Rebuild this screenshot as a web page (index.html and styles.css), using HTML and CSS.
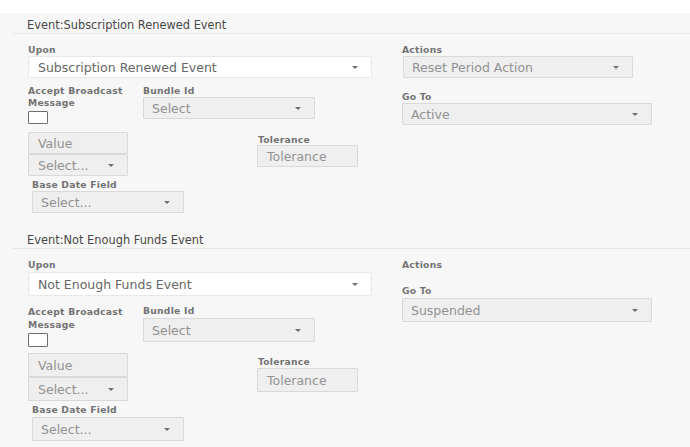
FILE: index.html
```html
<!DOCTYPE html>
<html>
<head>
<meta charset="utf-8">
<link rel="stylesheet" href="styles.css">
</head>
<body>
<div class="page">
  <section class="event">
    <div class="event-head">Event:Subscription Renewed Event</div>
    <div class="event-body">
      <div class="col-left">
        <div class="field">
          <div class="label">Upon</div>
          <div class="select select-white w-upon"><span>Subscription Renewed Event</span><i class="caret"></i></div>
        </div>
        <div class="row row-mid">
          <div class="field f-accept">
            <div class="label label-2">Accept Broadcast<br>Message</div>
            <div class="checkbox"></div>
          </div>
          <div class="field">
            <div class="label">Bundle Id</div>
            <div class="select w-bundle"><span>Select</span><i class="caret"></i></div>
          </div>
        </div>
        <div class="row row-val">
          <div class="stack">
            <div class="select w-val"><span>Value</span></div>
            <div class="select w-val"><span>Select...</span><i class="caret"></i></div>
          </div>
          <div class="field f-tol">
            <div class="label">Tolerance</div>
            <div class="select w-tol"><span>Tolerance</span></div>
          </div>
        </div>
        <div class="field f-base">
          <div class="label">Base Date Field</div>
          <div class="select w-base"><span>Select...</span><i class="caret"></i></div>
        </div>
      </div>
      <div class="col-right">
        <div class="field">
          <div class="label">Actions</div>
          <div class="select w-actions"><span>Reset Period Action</span><i class="caret"></i></div>
        </div>
        <div class="field f-goto">
          <div class="label">Go To</div>
          <div class="select w-goto"><span>Active</span><i class="caret"></i></div>
        </div>
      </div>
    </div>
  </section>

  <section class="event event-tall">
    <div class="event-head">Event:Not Enough Funds Event</div>
    <div class="event-body">
      <div class="col-left">
        <div class="field">
          <div class="label">Upon</div>
          <div class="select select-white w-upon"><span>Not Enough Funds Event</span><i class="caret"></i></div>
        </div>
        <div class="row row-mid">
          <div class="field f-accept">
            <div class="label label-2">Accept Broadcast<br>Message</div>
            <div class="checkbox"></div>
          </div>
          <div class="field">
            <div class="label">Bundle Id</div>
            <div class="select w-bundle"><span>Select</span><i class="caret"></i></div>
          </div>
        </div>
        <div class="row row-val">
          <div class="stack">
            <div class="select w-val"><span>Value</span></div>
            <div class="select w-val"><span>Select...</span><i class="caret"></i></div>
          </div>
          <div class="field f-tol">
            <div class="label">Tolerance</div>
            <div class="select w-tol"><span>Tolerance</span></div>
          </div>
        </div>
        <div class="field f-base">
          <div class="label">Base Date Field</div>
          <div class="select w-base"><span>Select...</span><i class="caret"></i></div>
        </div>
      </div>
      <div class="col-right">
        <div class="field">
          <div class="label">Actions</div>
        </div>
        <div class="field f-goto">
          <div class="label">Go To</div>
          <div class="select w-goto"><span>Suspended</span><i class="caret"></i></div>
        </div>
      </div>
    </div>
  </section>
</div>
</body>
</html>
```

FILE: styles.css
```css
* { box-sizing: border-box; }

html, body {
  margin: 0;
  padding: 0;
  background: #ffffff;
  font-family: "DejaVu Sans", "Liberation Sans", sans-serif;
}

.page {
  margin-top: 13px;
  background: #f7f7f7;
  min-height: 434px;
}

.event {
  --h: 22px;
  --lh: 11px;
  --lh2: 12px;
  padding-bottom: 15px;
}

.event-tall {
  --h: 24px;
  --lh: 12px;
  --lh2: 13px;
}

.event-head {
  margin-left: 12px;
  padding-left: 15px;
  padding-top: 4px;
  height: 21px;
  line-height: 17px;
  font-size: 11.4px;
  color: #474747;
  border-bottom: 1px solid #e9e9e9;
}

.event-body {
  display: flex;
  padding-top: 10px;
}

.event-tall .event-body { padding-top: 10px; }

.col-left {
  padding-left: 28px;
  width: 402px;
}

.col-right {
  display: flex;
  flex-direction: column;
}

.field {
  display: flex;
  flex-direction: column;
}

.label {
  font-size: 9.2px;
  font-weight: bold;
  color: #737373;
  line-height: var(--lh);
  height: var(--lh);
  letter-spacing: 0.25px;
}

.label-2 {
  line-height: var(--lh2);
  height: auto;
}

.select {
  position: relative;
  display: flex;
  align-items: center;
  height: var(--h);
  padding-left: 8px;
  background: #efefef;
  border: 1px solid #d9d9d9;
  border-radius: 1px;
  font-size: 12.5px;
  color: #929292;
  white-space: nowrap;
}

.select-white {
  background: #ffffff;
  border-color: #e8e8e8;
  color: #666666;
  padding-left: 9px;
}

.caret {
  position: absolute;
  right: 13px;
  top: 50%;
  margin-top: -1px;
  width: 0;
  height: 0;
  border-left: 3px solid transparent;
  border-right: 3px solid transparent;
  border-top: 3px solid #6e6e6e;
}

.w-upon { width: 344px; margin-top: 1px; }
.w-bundle { width: 172px; margin-top: 1px; }
.w-val { width: 100px; padding-left: 9px; }
.w-tol { width: 101px; padding-left: 9px; }
.w-base { width: 152px; margin-top: 1px; }
.w-actions { width: 230px; margin-top: 1px; margin-left: 1px; }
.w-goto { width: 250px; margin-top: 1px; }

.row {
  display: flex;
}

.row-mid {
  margin-top: 7px;
}

.event-tall .row-mid { margin-top: 9px; }

.f-accept {
  width: 115px;
}

.checkbox {
  width: 20px;
  height: 13px;
  margin-top: 2px;
  border: 1px solid #6e6e6e;
  background: #fff;
  border-radius: 1px;
}

.event-tall .checkbox { height: 14px; }

.row-val {
  margin-top: 8px;
}

.event-tall .row-val { margin-top: 6px; }

.stack {
  display: flex;
  flex-direction: column;
  width: 229px;
}

.f-tol {
  padding-top: 2px;
}

.f-tol .label { padding-left: 1px; }

.event-tall .f-tol { padding-top: 3px; }

.f-base {
  margin-left: 4px;
  margin-top: 3px;
}

.f-goto {
  margin-top: 13px;
}

.event-tall .f-goto { margin-top: 14px; }
```
